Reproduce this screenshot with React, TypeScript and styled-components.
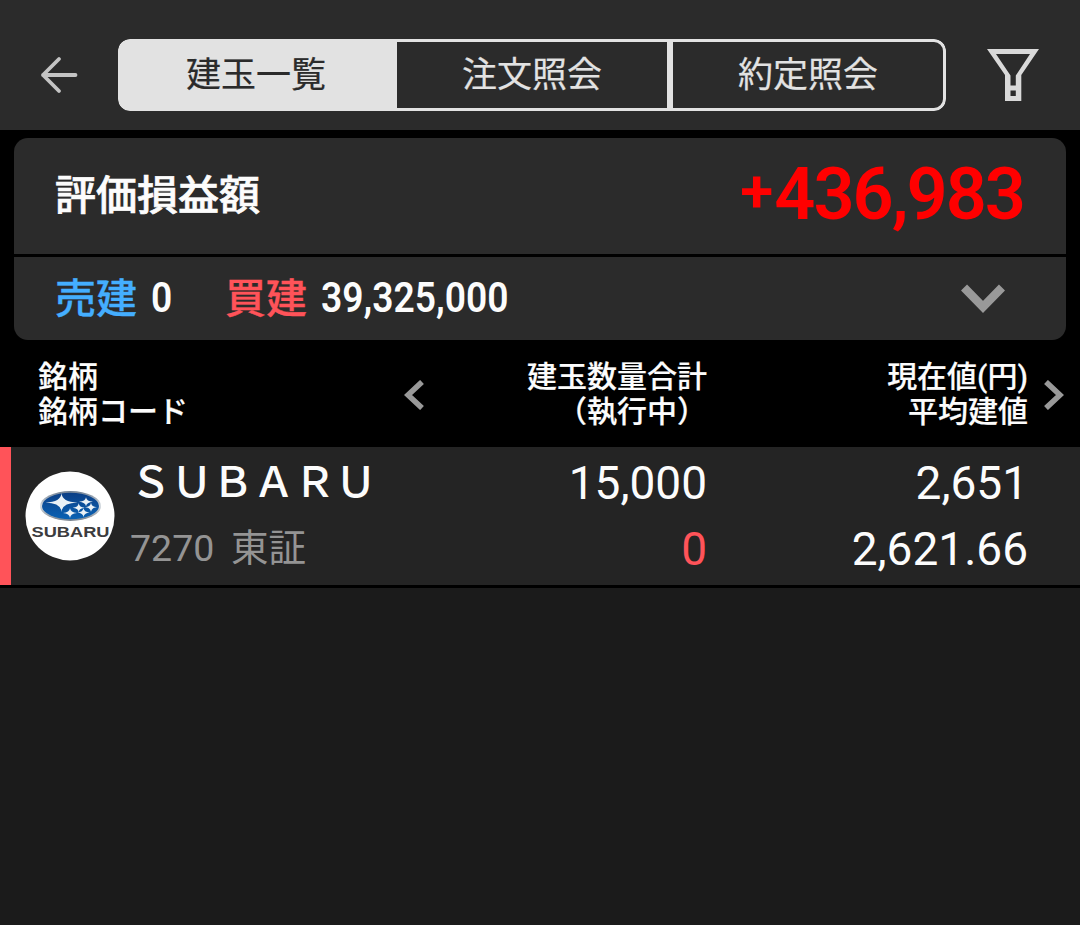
import React from 'react';
import styled, { createGlobalStyle } from 'styled-components'

const GlobalStyle = createGlobalStyle`
  * {
    box-sizing: border-box;
  }
  body {
    margin: 0;
    background: #1b1b1b;
    font-family: Roboto, "Noto Sans CJK JP", sans-serif;
    color: #fcfcfc;
  }
`

const Page = styled.div`
  width: 1080px;
  height: 925px;
  overflow: hidden;
  background: #1b1b1b;
`

const Header = styled.header`
  display: flex;
  height: 130px;
  padding: 39px 41px 0 40px;
  background: #2b2b2b;
`

const BackIcon = styled.svg`
  flex: none;
  width: 38px;
  height: 38px;
  margin: 17px 40px 0 0;
`

const Tabs = styled.nav`
  display: flex;
  flex: none;
  width: 828px;
  height: 72px;
  border-radius: 12px;
  overflow: hidden;
`

const Tab = styled.button<{ $active?: boolean }>`
  flex: 1;
  padding: 0;
  border: 3px solid #e2e2e2;
  background: ${p => (p.$active ? '#e2e2e2' : '#2b2b2b')};
  color: ${p => (p.$active ? '#2b2b2b' : '#e2e2e2')};
  font-family: Roboto, "Noto Sans CJK JP", sans-serif;
  font-size: 35px;
  line-height: 61px;
  -webkit-text-stroke: 0.2px currentColor;

  &:first-child {
    border-radius: 12px 0 0 12px;
    border-right-width: 6px;
    margin-right: -3px;
  }
  &:last-child {
    border-radius: 0 12px 12px 0;
  }
`

const FilterIcon = styled.svg`
  flex: none;
  width: 52px;
  height: 53px;
  margin: 10px 0 0 41px;
`

const Top = styled.div`
  height: 317px;
  padding: 8px 14px 0;
  background: #000;
`

const Summary = styled.section`
  display: flex;
  flex-direction: column;
  gap: 3px;
  height: 202px;
  border-radius: 14px;
  overflow: hidden;
`

const SummaryRow = styled.div<{ $height: number }>`
  display: flex;
  align-items: center;
  height: ${p => p.$height}px;
  padding: 0 42px 2px 41px;
  background: #2b2b2b;
`

const Label = styled.span<{ $color?: string; $bold?: boolean }>`
  padding-top: 2px;
  font-size: 41px;
  font-weight: 500;
  line-height: 60px;
  color: ${p => p.$color || '#fcfcfc'};
  -webkit-text-stroke: ${p => (p.$bold ? 0.7 : 0.3)}px currentColor;
`

const Profit = styled.strong`
  display: flex;
  margin-left: auto;
  font-size: 72px;
  font-weight: 600;
  line-height: 80px;
  letter-spacing: -2px;
  color: #ff0000;
`

const Sign = styled.span`
  margin-right: 3px;
  font-size: 60px;
  line-height: 74px;
`

const Amount = styled.span<{ $width: number }>`
  width: ${p => p.$width}px;
  margin-left: 14px;
  font-size: 42px;
  font-weight: 600;
  line-height: 50px;
  white-space: nowrap;
  transform: scaleX(0.886);
  transform-origin: left;
`

const ExpandIcon = styled.svg`
  width: 44px;
  height: 30px;
  margin: 3px 19px 0 auto;
`

const ColumnHeads = styled.div`
  display: flex;
  width: 1052px;
  height: 107px;
  padding: 19px 0 0 24px;
`

const Head = styled.div<{ $width: number; $right?: boolean }>`
  flex: none;
  width: ${p => p.$width}px;
  font-size: 30px;
  font-weight: 500;
  line-height: 35px;
  text-align: ${p => (p.$right ? 'right' : 'left')};
  white-space: nowrap;
  -webkit-text-stroke: 0.2px currentColor;
`

const SideIcon = styled.svg`
  flex: none;
  width: 20px;
  height: 30px;
  margin-top: 21px;
`

const Position = styled.div`
  display: flex;
  height: 138px;
  background: #242424;
  box-shadow: 0 3px 0 #000;
`

const BuyBar = styled.div`
  width: 11px;
  background: #ff5359;
`

const Logo = styled.svg`
  flex: none;
  width: 90px;
  height: 90px;
  margin: 24px 15px 0 14px;
`

const Name = styled.div`
  width: 330px;
`

const Brand = styled.div`
  height: 66px;
  font-size: 41.5px;
  font-weight: 500;
  line-height: 72px;
  letter-spacing: -0.5px;
  white-space: nowrap;
`

const Code = styled.div`
  font-size: 37.5px;
  line-height: 71px;
  word-spacing: -1px;
  color: #949494;
  white-space: pre;
`

const Values = styled.div<{ $width: number }>`
  width: ${p => p.$width}px;
  padding-top: 3px;
  font-size: 46px;
  line-height: 66px;
  text-align: right;
`

const Value = styled.div<{ $buy?: boolean }>`
  color: ${p => (p.$buy ? '#ff5359' : '#fcfcfc')};
`

const tabs = ['建玉一覧', '注文照会', '約定照会']

/* four pointed stars on the badge: x, y, x radius, y radius */
const stars = [
  [36.5, 31.5, 16, 9.5],
  [61, 30.7, 7, 4.5],
  [53.7, 36.7, 6, 4.5],
  [66, 36.3, 6, 4.5],
  [45, 42, 7, 5],
  [58.5, 41.5, 6, 4.5],
]

const starPath = ([x, y, rx, ry]: number[]) =>
  `M${x - rx} ${y}Q${x - 0.5} ${y - 0.5} ${x} ${y - ry}Q${x + 0.5} ${y - 0.5} ${x + rx} ${y}Q${x + 0.5} ${y + 0.5} ${x} ${y + ry}Q${x - 0.5} ${y + 0.5} ${x - rx} ${y}Z`

const SubaruLogo = () => (
  <Logo viewBox="0 0 90 90">
    <defs>
      <linearGradient id="oval" x1="0" y1="0" x2="0" y2="1">
        <stop offset="0" stopColor="#0c3f86" />
        <stop offset="1" stopColor="#0a62b4" />
      </linearGradient>
      <linearGradient id="rim" x1="0" y1="0" x2="0" y2="1">
        <stop offset="0" stopColor="#6f7f92" />
        <stop offset="0.5" stopColor="#d5dbe0" />
        <stop offset="1" stopColor="#78828e" />
      </linearGradient>
    </defs>
    <circle cx="45" cy="45" r="44.5" fill="#fff" />
    <ellipse cx="45.5" cy="35" rx="30.5" ry="15" fill="url(#rim)" />
    <ellipse cx="45.5" cy="35" rx="28.5" ry="13.2" fill="url(#oval)" />
    {stars.map((s, i) => <path key={i} d={starPath(s)} fill="#eaf1f6" />)}
    <text
      x="6.5"
      y="66"
      textLength="78"
      lengthAdjust="spacingAndGlyphs"
      fontFamily="Liberation Sans, sans-serif"
      fontSize="15"
      fontWeight="700"
      fill="#3c3c3e"
    >
      SUBARU
    </text>
  </Logo>
)

const App = () => {
  return (
    <Page>
      <GlobalStyle />
      <Header>
        <BackIcon viewBox="0 0 38 38" fill="none" stroke="#c4c4c4" strokeWidth="3.8" strokeLinecap="round" strokeLinejoin="round">
          <path d="M19 3L3 19L19 35M3 19H35.5" />
        </BackIcon>
        <Tabs>
          {tabs.map((tab, i) => <Tab key={tab} $active={i === 0}>{tab}</Tab>)}
        </Tabs>
        <FilterIcon viewBox="0 0 52 53" fill="#d9d9d9">
          <path fillRule="evenodd" d="M0 0H52L34.3 26V52H18V26ZM9 5L23.5 26.5V36.5H28.8V26.5L43 5ZM23.5 41.5V47H28.8V41.5Z" />
        </FilterIcon>
      </Header>

      <Top>
        <Summary>
          <SummaryRow $height={116}>
            <Label $bold>評価損益額</Label>
            <Profit><Sign>+</Sign>436,983</Profit>
          </SummaryRow>
          <SummaryRow $height={83}>
            <Label $color="#44aeff">売建</Label>
            <Amount $width={74}>0</Amount>
            <Label $color="#ff5359">買建</Label>
            <Amount $width={200}>39,325,000</Amount>
            <ExpandIcon viewBox="0 0 44 30" fill="none" stroke="#999" strokeWidth="8.5">
              <path d="M3 3.5L22 23L41 3.5" />
            </ExpandIcon>
          </SummaryRow>
        </Summary>

        <ColumnHeads>
          <Head $width={366}>銘柄<br />銘柄コード</Head>
          <SideIcon viewBox="0 0 20 30" fill="none" stroke="#999" strokeWidth="5.6">
            <path d="M18 2L4 15L18 28" />
          </SideIcon>
          <Head $width={283} $right>建玉数量合計<br />（執行中）</Head>
          <Head $width={321} $right>現在値(円)<br />平均建値</Head>
          <SideIcon viewBox="0 0 20 30" fill="none" stroke="#999" strokeWidth="5.6" style={{ marginLeft: 16 }}>
            <path d="M2 2L16 15L2 28" />
          </SideIcon>
        </ColumnHeads>
      </Top>

      <Position>
        <BuyBar />
        <SubaruLogo />
        <Name>
          <Brand>ＳＵＢＡＲＵ</Brand>
          <Code>7270  東証</Code>
        </Name>
        <Values $width={247}>
          <Value>15,000</Value>
          <Value $buy>0</Value>
        </Values>
        <Values $width={321}>
          <Value>2,651</Value>
          <Value>2,621.66</Value>
        </Values>
      </Position>
    </Page>
  )
}

export default App
